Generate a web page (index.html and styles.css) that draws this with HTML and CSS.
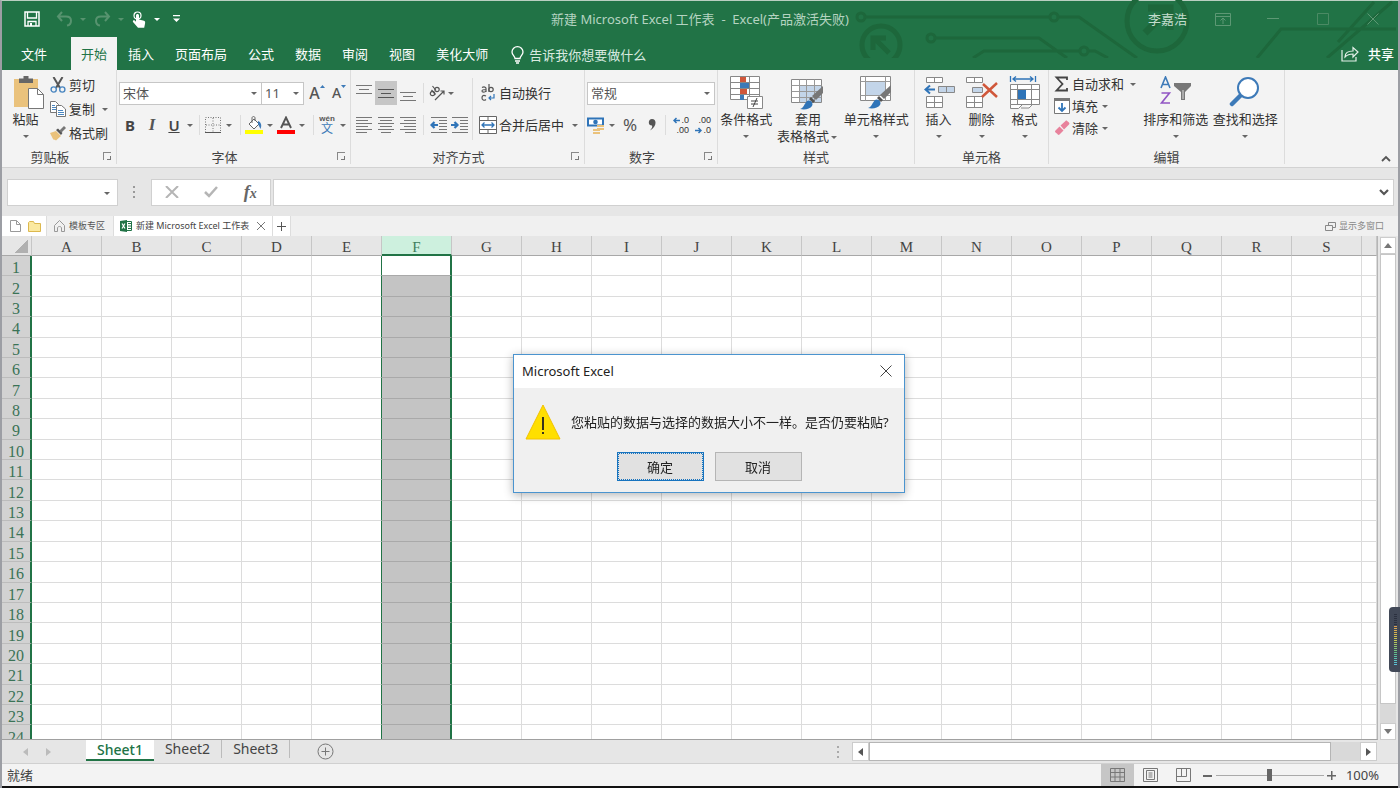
FILE: index.html
```html
<!DOCTYPE html>
<html lang="zh-CN">
<head>
<meta charset="utf-8">
<title>新建 Microsoft Excel 工作表 - Excel</title>
<link rel="stylesheet" href="styles.css">
</head>
<body>
<div class="app">
  <header class="head">
    <svg class="circuit" width="580" height="58" viewBox="820 0 580 58" fill="none" stroke="#1d673b" stroke-width="3">
      <circle cx="861" cy="17" r="4"/><path d="M865 17H1050M1058 17H1079L1137 58"/><circle cx="1054" cy="17" r="4"/>
      <circle cx="881" cy="45" r="19" stroke-width="5"/><path d="M889 53L876 40M873 50V38H886" stroke-width="5"/>
      <circle cx="931" cy="38" r="4"/><path d="M935 38H1039L1067 58M973 58L984 51H1080M1089 51H1095L1108 58"/><circle cx="1084" cy="51" r="4"/>
      <circle cx="1157" cy="21" r="30" stroke-width="5"/><path d="M1145 33L1166 12M1148 8H1170V30" stroke-width="7"/>
      <path d="M1257 58L1281 29H1396M1327 58L1392 2M1338 42L1374 2"/>
    </svg>
    <div class="titlebar">
      <div class="quick">
        <button class="q q-save" aria-label="保存"><svg width="16" height="16" viewBox="0 0 16 16"><path d="M1 1h14v14H1z" fill="none" stroke="#fff" stroke-width="1.5"/><path d="M3.5 1v6h9V1M4 15v-4.500h8V15" fill="none" stroke="#fff" stroke-width="1.300"/><path d="M6 12h2v3H6z" fill="#fff"/></svg></button>
        <button class="q" aria-label="撤消"><svg width="17" height="16" viewBox="0 0 17 16" fill="none" stroke="#57936f" stroke-width="2"><path d="M6 1L2 5.500l4 4.500M2 5.500h8c7 0 6 8 1 9"/></svg></button><i class="car dim"></i>
        <button class="q" aria-label="恢复"><svg width="17" height="16" viewBox="0 0 17 16" fill="none" stroke="#57936f" stroke-width="2"><path d="M11 1l4 4.500-4 4.500M15 5.500H7c-7 0-6 8-1 9"/></svg></button><i class="car dim"></i>
        <button class="q q-touch" aria-label="触摸模式"><svg width="14" height="17" viewBox="0 0 14 17"><circle cx="5.500" cy="4.500" r="3.500" fill="none" stroke="#fff" stroke-width="1.200"/><path d="M4 4.500c0-2 3-2 3 0V8.500l5 1.200c1.300.4 1.300 1.500 1 3l-.8 4H6L1 11c-.6-1.600 1-2.200 2-1.200l1 1z" fill="#fff"/></svg></button><i class="car light"></i>
        <button class="q" aria-label="自定义快速访问工具栏"><svg width="7" height="8" viewBox="0 0 7 8" fill="#fff"><path d="M0 0h7v1.300H0zM0 3.500h7L3.500 7z"/></svg></button>
      </div>
      <h1 class="doc-title">新建 Microsoft Excel 工作表&nbsp; -&nbsp; Excel(产品激活失败)</h1>
      <div class="win">
        <span class="user">李嘉浩</span>
        <button aria-label="功能区显示选项"><svg width="16" height="13" viewBox="0 0 16 13" fill="none" stroke="#5d9874"><path d="M.5.500h15v12H.5zM.5 3.500h15M8 11V5M5.500 7.500L8 5l2.500 2.500"/></svg></button>
        <button aria-label="最小化"><svg width="12" height="13" viewBox="0 0 12 13" stroke="#5d9874"><path d="M0 5.500h12"/></svg></button>
        <button aria-label="最大化"><svg width="12" height="13" viewBox="0 0 12 13" fill="none" stroke="#4b8a64"><path d="M.5.500h11v11H.5z"/></svg></button>
        <button aria-label="关闭"><svg width="12" height="13" viewBox="0 0 12 13" stroke="#5d9874"><path d="M.5.500l11 11M11.500.500l-11 11"/></svg></button>
      </div>
    </div>
    <nav class="tabs">
      <button class="tab file">文件</button><button class="tab on">开始</button><button class="tab">插入</button><button class="tab">页面布局</button><button class="tab">公式</button><button class="tab">数据</button><button class="tab">审阅</button><button class="tab">视图</button><button class="tab">美化大师</button>
      <button class="tell"><svg width="13" height="18" viewBox="0 0 13 18" fill="none" stroke="#fff" stroke-width="1.300"><path d="M4 12.500C4 10 1 9 1 6a5.500 5.300 0 0 1 11 0c0 3-3 4-3 6.500zM4 15h5M5 17h3"/></svg>告诉我你想要做什么</button>
      <button class="share"><svg width="18" height="16" viewBox="0 0 18 16" fill="none" stroke="#e4f1e9" stroke-width="1.200"><path d="M1 4v11h14v-4M4 11c0-4 3-6 8-6V1.500L17 6l-5 5V8c-4 0-6 1-8 3z"/></svg>共享</button>
    </nav>
  </header>

  <section class="ribbon">
    <div class="group g-clip">
      <div class="body">
        <button class="big paste"><svg width="32" height="34" viewBox="0 0 32 34"><path d="M1 3h24v28H1z" fill="#eac27c"/><path d="M6 2.500h4.500V0h5v2.500H20V7H6z" fill="#666"/><path d="M15.500 12.500h9l6 6v14h-15z" fill="#fff" stroke="#777"/><path d="M24.500 12.500v6h6" fill="none" stroke="#777"/></svg><span>粘贴</span><i class="car"></i></button>
        <div class="list l24">
          <button><svg width="16" height="16" viewBox="0 0 16 16" fill="none"><path d="M3.500 0l6.500 11M12.500 0L6 11" stroke="#555" stroke-width="2"/><circle cx="3.700" cy="12.500" r="2.600" stroke="#4a86c0" stroke-width="1.400"/><circle cx="12.300" cy="12.500" r="2.600" stroke="#4a86c0" stroke-width="1.400"/></svg>剪切</button>
          <button><svg width="16" height="16" viewBox="0 0 16 16" fill="#fff" stroke="#777"><path d="M.5.500h5l3 3v8h-8z"/><path d="M2 4.500h3M2 6.500h4M2 8.500h4" stroke="#4a86c0"/><path d="M6.500 4.500h5l4 3.500v7.500h-9z"/><path d="M8 9.500h5M8 11.500h6M8 13.500h6" stroke="#4a86c0"/></svg>复制<i class="car"></i></button>
          <button><svg width="16" height="16" viewBox="0 0 16 16"><path d="M0 8l6-2 5 5-5 4.500c-1-1-2 0-3-1.500z" fill="#eac27c"/><path d="M6 5l2-1.500L12.500 8 11 10z" fill="#555"/><path d="M9.500 5.500L14 1l2 2-4.500 4.500z" fill="#777"/></svg>格式刷</button>
        </div>
      </div>
      <footer><span>剪贴板</span><i class="launch"></i></footer>
    </div>

    <div class="group g-font">
      <div class="body rows">
        <div class="row r1">
          <span class="sel s-font"><select aria-label="字体"><option>宋体</option></select></span><span class="sel s-size"><select aria-label="字号"><option>11</option></select></span>
          <button class="t22 grow" aria-label="增大字号">A<svg width="5" height="3"><path d="M0 3L2.500 0 5 3z" fill="#3d7ab8"/></svg></button>
          <button class="t22 shrink" aria-label="减小字号">A<svg width="5" height="3"><path d="M0 0h5L2.500 3z" fill="#3d7ab8"/></svg></button>
        </div>
        <div class="row r2">
          <button class="t22 b">B</button><button class="t22 i">I</button><button class="t22 u">U</button><i class="car c10"></i><i class="sep"></i>
          <button class="t18" aria-label="边框"><svg width="16" height="16" viewBox="0 0 16 16" fill="none" stroke="#777"><path d="M.5 15.500V.5h15v15M8 1v14M1 8h14" stroke-dasharray="1 1.500"/><path d="M0 15.500h16" stroke="#555"/></svg></button><i class="car c14"></i><i class="sep"></i>
          <button class="t18" aria-label="填充颜色"><svg width="18" height="18" viewBox="0 0 18 18"><path d="M0 14h18v4H0z" fill="#ff0"/><path d="M4 8l5-5 5 5-5 5z" fill="#fff" stroke="#666"/><path d="M7 7V2c0-2 3-2 3 0v3" fill="none" stroke="#666"/><path d="M13 5c3 1 4 4 2.500 8L13 8z" fill="#3d7ab8"/></svg></button><i class="car c14"></i>
          <button class="t18" aria-label="字体颜色"><svg width="18" height="18" viewBox="0 0 18 18"><path d="M0 14h18v4H0z" fill="#f00"/><path d="M4 12L9 1.500 14 12M6 8.500h6" fill="none" stroke="#555" stroke-width="1.900"/></svg></button><i class="car c14"></i><i class="sep"></i>
          <button class="t18 py"><small>wén</small><span>文</span></button><i class="car c14"></i>
        </div>
      </div>
      <footer><span>字体</span><i class="launch"></i></footer>
    </div>

    <div class="group g-align">
      <div class="body cols">
        <div class="rows a-left">
          <div class="row r1">
            <button class="t22" aria-label="顶端对齐"><svg width="16" height="16" viewBox="0 0 16 16" stroke="#777"><path d="M0 .5h16M3 4.500h10M0 8.500h16"/></svg></button>
            <button class="t22 pressed" aria-label="垂直居中"><svg width="16" height="16" viewBox="0 0 16 16" stroke="#555"><path d="M0 4.500h16M3 8.500h10M0 12.500h16"/></svg></button>
            <button class="t22" aria-label="底端对齐"><svg width="16" height="16" viewBox="0 0 16 16" stroke="#777"><path d="M0 7.500h16M3 11.500h10M0 15.500h16"/></svg></button><i class="sep"></i>
            <button class="t18" aria-label="方向"><svg width="16" height="16" viewBox="0 0 16 16" fill="none" stroke="#555" stroke-width="1.200"><circle cx="3.500" cy="8.500" r="2.200"/><path d="M2.500 5l4 4.500"/><circle cx="8" cy="4.500" r="2.200"/><path d="M3.500 1l3.500 4.500M6 15l9-9M11.500 6H15v3.500"/></svg></button><i class="car c10"></i>
          </div>
          <div class="row r2">
            <button class="t22" aria-label="左对齐"><svg width="16" height="16" viewBox="0 0 16 16" stroke="#777"><path d="M0 .5h16M0 3.500h12M0 6.500h16M0 9.500h12M0 12.500h16M0 15.500h11"/></svg></button>
            <button class="t22" aria-label="居中"><svg width="16" height="16" viewBox="0 0 16 16" stroke="#777"><path d="M0 .5h16M2 3.500h12M0 6.500h16M2 9.500h12M0 12.500h16M3 15.500h10"/></svg></button>
            <button class="t22" aria-label="右对齐"><svg width="16" height="16" viewBox="0 0 16 16" stroke="#777"><path d="M0 .5h16M4 3.500h12M0 6.500h16M4 9.500h12M0 12.500h16M5 15.500h11"/></svg></button><i class="sep"></i>
            <button class="t22 ind" aria-label="减少缩进"><svg width="18" height="16" viewBox="0 0 18 16" stroke="#777"><path d="M1 .5h16M9 3.500h8M9 6.500h8M9 9.500h8M9 12.500h8M1 15.500h16"/><path d="M8 8H2M4.500 5L1.500 8l3 3" fill="none" stroke="#2f74b8" stroke-width="2.200"/></svg></button>
            <button class="t22 ind" aria-label="增加缩进"><svg width="18" height="16" viewBox="0 0 18 16" stroke="#777"><path d="M1 .5h16M9 3.500h8M9 6.500h8M9 9.500h8M9 12.500h8M1 15.500h16"/><path d="M0 8h6M3.500 5l3 3-3 3" fill="none" stroke="#2f74b8" stroke-width="2.200"/></svg></button>
          </div>
        </div>
        <div class="rows a-right">
          <div class="row r1"><button class="wide"><svg width="18" height="18" viewBox="0 0 18 18" fill="none" stroke="#555" stroke-width="1.200"><path d="M3 3.500c2-1 4-.5 4 1V8M7 5.500C5 5.500 3 5.500 3 7s3 1.500 4 0M10 0v8M7 12c-3-1.500-4 0-4 2s2 3 4 1.500"/><circle cx="12" cy="5.500" r="2.200"/><path d="M15 10v4h-5M12 12l-2 2 2 2" stroke="#2f74b8"/></svg>自动换行</button></div>
          <div class="row r2"><button class="wide"><svg width="18" height="18" viewBox="0 0 18 18" fill="#fff" stroke="#666"><path d="M.5.500h17v17H.5zM9 .5v4M9 13v4.500M.5 4.500h17M.5 13.500h17"/><path d="M3 9h12M5.500 6.500L3 9l2.500 2.500M12.500 6.500L15 9l-2.500 2.500" fill="none" stroke="#2f74b8" stroke-width="1.300"/></svg>合并后居中<i class="car c14"></i></button></div>
        </div>
      </div>
      <footer><span>对齐方式</span><i class="launch"></i></footer>
    </div>

    <div class="group g-num">
      <div class="body rows">
        <div class="row r1"><span class="sel s-num"><select aria-label="数字格式"><option>常规</option></select></span></div>
        <div class="row r2 numrow">
          <button class="t18" aria-label="会计数字格式"><svg width="18" height="17" viewBox="0 0 18 17"><path d="M1 1.500h15v7H1z" fill="#fff" stroke="#2f74b8" stroke-width="2"/><circle cx="8.500" cy="5" r="2.300" fill="#2f74b8"/><path d="M10 8h7v2h-7zM10 11h7v2h-7zM6 12h7v2H6zM6 15h7v2H6z" fill="#eac27c"/></svg></button><i class="car c14"></i>
          <button class="t22 pct">%</button><button class="t22" aria-label="千位分隔样式"><svg width="9" height="12" viewBox="0 0 9 12"><path d="M4 0c5 0 5 8-2 11.500 2-2 2.500-3.500 2-5C-.5 6.500 0 0 4 0z" fill="#555"/></svg></button><i class="sep"></i>
          <button class="dec"><span><svg width="7" height="7" viewBox="0 0 7 7" fill="none" stroke="#2f74b8" stroke-width="1.500"><path d="M7 3.500H1M3.500 1L1 3.500 3.500 6"/></svg>.0</span><span>.00</span></button><button class="dec"><span>.00</span><span><svg width="7" height="7" viewBox="0 0 7 7" fill="none" stroke="#2f74b8" stroke-width="1.500"><path d="M0 3.500h6M3.500 1L6 3.500 3.500 6"/></svg>.0</span></button>
        </div>
      </div>
      <footer><span>数字</span><i class="launch"></i></footer>
    </div>

    <div class="group g-style">
      <div class="body">
        <button class="big"><svg width="34" height="34" viewBox="1 0 34 34"><path d="M2.500.500h29v23h-29zM12.500.5v23M21.500.5v23M2.500 6.500h29M2.500 12.500h29M2.500 18.500h29" fill="#fff" stroke="#888"/><path d="M12 1h6v5h-6zM12 13h7v5h-7z" fill="#d0573a"/><path d="M12 7h9v5h-9zM12 19h4v5h-4z" fill="#3d7ab8"/><path d="M19.500 20.500h15v12h-15z" fill="#fff" stroke="#888"/><path d="M23 25h7M23 28h7M29 22l-4 9" stroke="#444" fill="none"/></svg><span>条件格式</span><i class="car"></i></button>
        <button class="big"><svg width="34" height="34" viewBox="0 0 34 34"><path d="M.5 3.500h30v23H.5z" fill="#fff" stroke="#888"/><path d="M8 9h22v17H8z" fill="#c3d5e9"/><path d="M.5 9.500h30M.5 15.500h30M.5 21.500h30M8.500 3.500v23M15.500 3.500v23M23.500 3.500v23" stroke="#999"/><path d="M32 10v7l-7 7-4-4z" fill="#777"/><path d="M20 21l4 4-2 2-4-4z" fill="#555"/><path d="M9 33c4-1 4-5 7-8 3-2 7 2 5 5s-7 4-12 3z" fill="#2f74b8"/></svg><span>套用<br>表格格式<i class="car c10"></i></span></button>
        <button class="big"><svg width="34" height="34" viewBox="0 0 34 34"><path d="M1.500.500h30v24h-30z" fill="#fff" stroke="#888"/><path d="M6.500.5v24M26.500.5v24M1.500 5.500h30M1.500 19.500h30" stroke="#999"/><path d="M7 6h19v13H7z" fill="#c3d5e9"/><path d="M32 9v7l-7 7-4-4z" fill="#777"/><path d="M20 20l4 4-2 2-4-4z" fill="#555"/><path d="M9 32c4-1 4-5 7-8 3-2 7 2 5 5s-7 4-12 3z" fill="#2f74b8"/></svg><span>单元格样式</span><i class="car"></i></button>
      </div>
      <footer><span>样式</span></footer>
    </div>

    <div class="group g-cell">
      <div class="body">
        <button class="big"><svg width="32" height="34" viewBox="0 0 32 34" fill="#fff" stroke="#888"><path d="M3.500 1.500h16v5h-16zM11.500 1.500v5M3.500 20.500h16v11h-16zM11.500 20.500v11M3.500 26.500h16"/><path d="M15.500 10.500h16v6h-16zM23.500 10.500v6" fill="#c3d5e9"/><path d="M12 13.500H3M7 9.500l-4.500 4 4.500 4" fill="none" stroke="#2f74b8" stroke-width="2"/></svg><span>插入</span><i class="car"></i></button>
        <button class="big"><svg width="32" height="34" viewBox="0 0 32 34" fill="#fff" stroke="#888"><path d="M.5 1.500h16v5H.5zM8.500 1.500v5M.5 20.500h16v11H.5zM8.500 20.500v11M.5 26.500h16"/><path d="M6.500 11.500h10v5h-10z" fill="#c3d5e9"/><path d="M17 8l14 13M31 7L16 21" fill="none" stroke="#d0573a" stroke-width="2.500"/></svg><span>删除</span><i class="car"></i></button>
        <button class="big"><svg width="32" height="34" viewBox="0 0 32 34" fill="#fff" stroke="#888"><path d="M1.500 8.500h29v20h-29zM8.500 8.500v20M22.500 8.500v20M1.500 13.500h29M1.500 23.500h29M1.500 28.500v4h8l4-4M12 32h8l3-3"/><path d="M9 14h8v9H9z" fill="#2f74b8" stroke="none"/><path d="M1.500 0v6M26.500 0v6M4 3h20M7 .5L4 3l3 2.500M21 .5L24 3l-3 2.500" fill="none" stroke="#2f74b8" stroke-width="1.300"/></svg><span>格式</span><i class="car"></i></button>
      </div>
      <footer><span>单元格</span></footer>
    </div>

    <div class="group g-edit">
      <div class="body">
        <div class="list l23">
          <button><svg width="16" height="16" viewBox="0 0 16 16" fill="none" stroke="#444" stroke-width="1.800"><path d="M13 4V1.500H2.500L8.500 8l-6 6.500H13V12"/></svg>自动求和<i class="car"></i></button>
          <button><svg width="16" height="16" viewBox="0 0 16 16"><path d="M.5.500h15v15H.5z" fill="#fff" stroke="#777"/><path d="M0 0h16v3H0z" fill="#777"/><path d="M8 5v8M4.500 9.500L8 13l3.500-3.500" fill="none" stroke="#2f74b8" stroke-width="1.800"/></svg>填充<i class="car c12"></i></button>
          <button><svg width="16" height="16" viewBox="0 0 16 16"><path d="M6.500 5.500l5-4.500c1-1 1.500 0 2.500.800s2 1.700 1 2.700l-5 5z" fill="#e8829c"/><path d="M5.500 6.500l4 4-4 4c-1 1-1.500 0-3-1.200S.500 11.500 1.500 10.500z" fill="#e8829c"/></svg>清除<i class="car c12"></i></button>
        </div>
        <button class="big"><svg width="32" height="34" viewBox="0 0 32 34" fill="none"><path d="M1 12L5.500 1 10 12M2.500 8.500h6" stroke="#3d7ab8" stroke-width="1.600"/><path d="M1.500 17h8l-8 10h8.500" stroke="#9155c4" stroke-width="1.600"/><path d="M14 7h17v3l-6 6v8h-4v-8l-7-6z" fill="#777"/><path d="M23 14v9" stroke="#ddd"/></svg><span>排序和筛选</span><i class="car"></i></button>
        <button class="big"><svg width="32" height="34" viewBox="0 0 32 34"><path d="M11 20l-8 8" stroke="#3d7ab8" stroke-width="4.500" stroke-linecap="round"/><circle cx="19" cy="12" r="10" fill="#fff" stroke="#3d7ab8" stroke-width="2"/></svg><span>查找和选择</span><i class="car"></i></button>
      </div>
      <footer><span>编辑</span></footer>
    </div>
    <button class="collapse" aria-label="折叠功能区"><svg width="10" height="7" viewBox="0 0 10 7" fill="none" stroke="#555" stroke-width="1.800"><path d="M1 6l4-4 4 4"/></svg></button>
  </section>

  <section class="formula">
    <span class="sel namebox"><input aria-label="名称框"></span>
    <svg class="dots" width="2" height="14" viewBox="0 0 2 14" fill="#999"><path d="M0 1h2v2H0zM0 6h2v2H0zM0 11h2v2H0z"/></svg>
    <div class="fx">
      <button aria-label="取消输入"><svg width="14" height="12" viewBox="0 0 14 12" stroke="#b5b5b5" stroke-width="2"><path d="M1 0l12 12M13 0L1 12"/></svg></button>
      <button aria-label="输入"><svg width="14" height="12" viewBox="0 0 14 12" fill="none" stroke="#b5b5b5" stroke-width="2.500"><path d="M1 6l4 4 8-9"/></svg></button>
      <button class="fxb">f<sub>x</sub></button>
    </div>
    <div class="fin"><input aria-label="编辑栏"><button aria-label="展开编辑栏"><svg width="10" height="7" viewBox="0 0 10 7" fill="none" stroke="#555" stroke-width="2.200"><path d="M1 1l4 4 4-4"/></svg></button></div>
  </section>

  <section class="docs">
    <div class="d-new"><button aria-label="新建"><svg width="11" height="12" viewBox="0 0 11 12" fill="#fff" stroke="#999"><path d="M.5.500h6l4 4v7H.5zM6.500.500v4h4"/></svg></button><button aria-label="打开"><svg width="13" height="11" viewBox="0 0 13 11" fill="#fbe9a0" stroke="#dcb84e"><path d="M.5 1.500L1.500.500h4l1 2h6v8H.5z"/></svg></button></div>
    <button class="d-tab"><svg width="11" height="12" viewBox="0 0 11 12" fill="none" stroke="#999"><path d="M.5 5.500l5-5 5 5v6H7.500V8c0-2-4-2-4 0v3.500H.5z"/></svg>模板专区</button>
    <div class="d-tab on"><svg width="12" height="12" viewBox="0 0 12 12"><path d="M6 1.500h5.500v9H6z" fill="#fff" stroke="#217346"/><path d="M8 3.500h3M8 6h3M8 8.500h3" stroke="#217346"/><path d="M0 1l7-1v12l-7-1z" fill="#217346"/><path d="M2 3.500l3 5M5 3.500l-3 5" stroke="#fff" stroke-width="1.200"/></svg><span>新建 Microsoft Excel 工作表</span><button aria-label="关闭标签"><svg width="8" height="8" viewBox="0 0 8 8" stroke="#777"><path d="M0 0l8 8M8 0L0 8"/></svg></button></div>
    <button class="d-plus" aria-label="新建标签"><svg width="9" height="9" viewBox="0 0 9 9" stroke="#555"><path d="M4.500 0v9M0 4.500h9"/></svg></button>
    <button class="d-multi"><svg width="11" height="9" viewBox="0 0 11 9" fill="#f0f0f0" stroke="#888"><path d="M3.500.500h7v5h-7z"/><path d="M.5 3.500h7v5h-7z"/></svg>显示多窗口</button>
  </section>

  <main class="sheet">
    <div class="gridwrap"><table class="grid"><colgroup id="cols"></colgroup><thead><tr id="head"></tr></thead><tbody id="rows"></tbody></table></div>
    <div class="vscroll"><button aria-label="向上滚动"><svg width="8" height="5"><path d="M0 5L4 0l4 5z" fill="#777"/></svg></button><div class="vtrack"><div class="vthumb"></div></div><button aria-label="向下滚动"><svg width="8" height="5"><path d="M0 0h8L4 5z" fill="#777"/></svg></button></div>
  </main>

  <section class="sheetbar">
    <div class="snav"><button aria-label="上一个工作表"><svg width="5" height="8"><path d="M5 0v8L0 4z" fill="#bbb"/></svg></button><button aria-label="下一个工作表"><svg width="5" height="8"><path d="M0 0v8l5-4z" fill="#bbb"/></svg></button></div>
    <button class="st on">Sheet1</button><button class="st">Sheet2</button><button class="st">Sheet3</button>
    <button class="sadd" aria-label="新工作表"><svg width="17" height="17" viewBox="0 0 17 17" fill="none" stroke="#777"><circle cx="8.500" cy="8.500" r="7.500"/><path d="M8.500 4.500v8M4.500 8.500h8"/></svg></button>
    <svg class="dots sdots" width="2" height="14" viewBox="0 0 2 14" fill="#aaa"><path d="M0 1h2v2H0zM0 6h2v2H0zM0 11h2v2H0z"/></svg>
    <div class="hscroll"><button aria-label="向左滚动"><svg width="5" height="8"><path d="M5 0v8L0 4z" fill="#555"/></svg></button><div class="htrack"><div class="hthumb"></div></div><button aria-label="向右滚动"><svg width="5" height="8"><path d="M0 0v8l5-4z" fill="#555"/></svg></button></div>
  </section>

  <footer class="status">
    <span class="ready">就绪</span>
    <button class="view on" aria-label="普通"><svg width="15" height="14" viewBox="0 0 15 14" fill="none" stroke="#777"><path d="M.5.500h14v13H.5zM5 .5v13M10 .5v13M.5 4.500h14M.5 9h14"/></svg></button>
    <button class="view" aria-label="页面布局"><svg width="15" height="14" viewBox="0 0 15 14" fill="none" stroke="#777"><path d="M.5.500h14v13H.5zM3.500 2.500h8v9h-8zM5.500 5h4M5.500 7h4M5.500 9h4"/></svg></button>
    <button class="view" aria-label="分页预览"><svg width="15" height="14" viewBox="0 0 15 14" fill="none" stroke="#777"><path d="M.5.500h14v13H.5zM5.500.500v8M10.500.500v8M.5 8.500h10"/></svg></button>
    <button class="zb" aria-label="缩小"><svg width="9" height="9"><path d="M0 4h9v2H0z" fill="#666"/></svg></button>
    <input class="zoom" type="range" min="0" max="100" value="50" aria-label="缩放">
    <button class="zb" aria-label="放大"><svg width="9" height="9"><path d="M0 4h9v1.500H0zM4 0h1.500v9H4z" fill="#666"/></svg></button>
    <span class="pct100">100%</span>
  </footer>
</div>

<section class="dialog" role="dialog" aria-labelledby="dt">
  <header><h2 id="dt">Microsoft Excel</h2><button aria-label="关闭"><svg width="12" height="12" viewBox="0 0 12 12" stroke="#444"><path d="M.5.500l11 11M11.500.500l-11 11"/></svg></button></header>
  <div class="msg"><svg width="36" height="36" viewBox="0 0 36 36"><path d="M18 1l17 34H1z" fill="#ffdf00" stroke="#f2c200"/><path d="M18 13v13M18 28v2" stroke="#222" stroke-width="1.800"/></svg><p>您粘贴的数据与选择的数据大小不一样。是否仍要粘贴?</p></div>
  <div class="acts"><button class="ok">确定</button><button>取消</button></div>
</section>
<div class="meter"><i></i><b></b></div>
<script src="script.js"></script>
</body>
</html>
```
FILE: styles.css
```css
* { box-sizing: border-box; }
body { margin: 0; font: 13px/18px "Noto Sans", "Noto Sans CJK SC", sans-serif; color: #333; overflow: hidden; }
button { font: inherit; color: inherit; background: none; border: 0; padding: 0; display: flex; align-items: center; justify-content: center; white-space: nowrap; }
h1, h2, p { margin: 0; font-size: 13px; font-weight: 400; }
svg { display: block; flex: none; }
input, select { font: inherit; color: inherit; border: 0; outline: 0; background: none; padding: 0; margin: 0; appearance: none; }

.app { height: 100vh; display: flex; flex-direction: column; border: solid #9c9ea4; border-width: 1px 2px 0; border-top-color: #b9cfc1; background: #e6e6e6; }

/* title bar and ribbon tabs */
.head { position: relative; background: #217346; color: #fff; height: 69px; flex: none; display: flex; flex-direction: column; }
.circuit { position: absolute; right: -2px; top: -1px; }
.titlebar { position: relative; height: 36px; display: flex; align-items: center; justify-content: space-between; }
.quick { display: flex; align-items: center; padding-left: 19px; }
.q { width: 22px; height: 24px; }
.q-save { margin-right: 10px; }
.q-touch { width: 20px; }
.car { flex: none; display: inline-flex; align-items: center; justify-content: center; width: 16px; height: 8px; }
.car::before { content: ""; border: solid transparent; border-width: 3px 3px 0; border-top-color: #666; }
.car.dim::before { border-top-color: #57936f; }
.car.light::before { border-top-color: #fff; }
.car.c10 { width: 10px; }
.car.c12 { width: 12px; }
.car.c14 { width: 14px; }
.doc-title { position: absolute; left: 0; right: 0; text-align: center; color: #b5d3c1; pointer-events: none; }
.win { display: flex; align-items: center; }
.win button { width: 50px; height: 24px; }
.user { color: #c3dccd; margin-right: 11px; }
.tabs { position: relative; display: flex; gap: 1px; height: 33px; }
.tab { padding: 0 10px; }
.tab.file { padding: 0 23px 0 19px; }
.tab.on { background: #f3f3f3; color: #217346; }
.tell { gap: 5px; margin-left: 12px; padding-top: 2px; color: #d9eae0; }
.share { gap: 9px; margin-left: auto; padding-right: 4px; font-weight: 500; }

/* ribbon */
.ribbon { height: 98px; flex: none; display: flex; background: #f3f3f3; border-bottom: 1px solid #d2d2d2; }
.group { flex: none; display: flex; flex-direction: column; border-right: 1px solid #dcdcdc; margin-bottom: 3px; }
.g-clip { width: 115px; }
.g-font, .g-align { width: 234px; }
.g-num { width: 133px; }
.g-style { width: 197px; }
.g-cell { width: 134px; }
.g-edit { width: 236px; }
.body { flex: 1; display: flex; }
.group footer { height: 16px; display: flex; align-items: center; text-align: center; color: #444; }
.group footer span { flex: 1; padding-top: 1px; }
.launch { width: 18px; height: 8px; display: flex; }
.launch::before { content: ""; width: 7px; height: 7px; margin-left: 5px; border: solid #888; border-width: 1px 0 0 1px; background: linear-gradient(#777, #777) right bottom / 4px 1px no-repeat, linear-gradient(#777, #777) right bottom / 1px 4px no-repeat, linear-gradient(45deg, transparent 42%, #999 42% 58%, transparent 58%) right bottom / 4px 4px no-repeat; }
.launch::before { background: linear-gradient(#777, #777) right bottom / 4px 1px no-repeat, linear-gradient(#777, #777) right bottom / 1px 4px no-repeat; }
.big { flex: 1 1 auto; flex-direction: column; justify-content: flex-start; padding-top: 6px; line-height: 17px; color: #333; }
.big > span { display: block; margin-top: 1px; }
.big > .car { margin-top: 4px; }
.big span .car { vertical-align: middle; }
.g-cell .body { padding-left: 2px; }
.g-cell .big { flex: none; width: 43px; }
.g-style .body { padding-right: 3px; }
.g-edit .body { padding-right: 4px; }
.paste { flex: none; width: 46px; padding-left: 7px; }
.paste > span, .paste > .car { margin-right: 6px; }
.list { display: flex; flex-direction: column; }
.list button { gap: 4px; justify-content: flex-start; }
.list .car { margin-left: -1px; }
.l24 { padding: 3px 0 0 2px; }
.l24 button { height: 24px; gap: 3px; }
.l23 { padding: 3px 0 0 5px; width: 92px; }
.l23 button { height: 22px; gap: 2px; }
.rows { display: flex; flex-direction: column; gap: 8px; padding-top: 11px; }
.row { display: flex; height: 24px; align-items: center; }
.g-font .rows, .g-num .rows { padding-left: 2px; }
.t22 { width: 22px; height: 24px; }
.t18 { width: 18px; height: 24px; }
.ind { width: 21px; }
.sep { width: 1px; height: 20px; background: #dcdcdc; margin: 0 4px; }
.sel { position: relative; display: block; background: #fff; border: 1px solid #c6c6c6; height: 23px; }
.sel select, .sel input { width: 100%; height: 21px; padding-left: 3px; color: #555; display: block; }
.sel::after { content: ""; position: absolute; right: 4px; top: 9px; border: solid transparent; border-width: 3px 3px 0; border-top-color: #666; pointer-events: none; }
.s-font { width: 143px; }
.s-size { width: 42px; border-left: 0; margin-right: 2px; }
.s-num { width: 128px; }
.grow, .shrink { font-size: 16px; color: #555; font-weight: 500; }
.shrink { font-size: 14px; }
.grow svg, .shrink svg { align-self: flex-start; margin-top: 4px; }
.b { font-weight: 700; font-size: 15px; color: #444; }
.i { font: italic 700 17px "Liberation Serif", serif; color: #555; }
.u { font-size: 15px; font-weight: 600; text-decoration: underline; color: #444; }
.py { flex-direction: column; color: #3d7ab8; font-size: 12px; line-height: 12px; }
.py small { font: 700 8px/8px "Liberation Sans", sans-serif; color: #555; }
.g-font .body { padding-left: 2px; }
.a-left { width: 121px; padding-left: 2px; }
.a-left, .a-right { flex: none; }
.a-right { padding-left: 6px; border-left: 1px solid #dcdcdc; margin: 8px 0; padding-top: 3px; }
.pressed { background: #c6c6c6; }
.wide { gap: 2px; }
.wide .car { margin-left: 2px; }
.g-num .body { padding-left: 2px; }
.pct { font-size: 17px; color: #555; }
.numrow .sep { margin: 0 5px 0 2px; }
.dec { width: 22px; flex-direction: column; align-items: flex-end; padding-right: 4px; font: 9px/10px "Liberation Sans", sans-serif; color: #333; }
.dec span { display: flex; align-items: center; gap: 1px; }
.collapse { margin: auto 5px 2px auto; width: 14px; height: 14px; }

/* formula bar */
.formula { flex: none; display: flex; align-items: center; height: 48px; padding: 0 4px 0 5px; }
.namebox { width: 111px; height: 27px; border-color: #d0d0d0; }
.namebox::after { top: 12px; right: 7px; }
.dots { margin: 0 16px 0 15px; }
.fx { display: flex; width: 120px; height: 27px; background: #fff; border: 1px solid #d0d0d0; }
.fx button { flex: 1; }
.fxb { font: italic 700 18px/20px "Liberation Serif", serif; color: #666; }
.fxb sub { font-size: 14px; line-height: 10px; align-self: flex-end; margin-bottom: 6px; }
.fin { flex: 1; display: flex; margin-left: 2px; height: 27px; background: #fff; border: 1px solid #d0d0d0; }
.fin input { flex: 1; }
.fin button { width: 18px; }

/* document tabs */
.docs { flex: none; display: flex; height: 20px; background: #f0f0f0; font-size: 9px; line-height: 14px; color: #555; }
.d-new { display: flex; gap: 7px; width: 44px; padding-left: 8px; background: #fff; }
.d-tab { display: flex; align-items: center; gap: 4px; padding: 0 8px 0 7px; border-left: 1px solid #ddd; }
.d-tab.on { background: #fff; color: #444; padding: 0 3px 0 6px; }
.d-tab.on button { width: 16px; }
.d-plus { width: 19px; background: #fff; border: solid #ddd; border-width: 0 1px; }
.d-multi { margin-left: auto; gap: 3px; padding-right: 14px; color: #888; }

/* worksheet */
.sheet { flex: 1; min-height: 0; display: flex; }
.gridwrap { flex: 1; min-width: 0; overflow: hidden; background: #fff; border-right: 1px solid #b5b5b5; border-bottom: 1px solid #a0a0a0; }
.grid { table-layout: fixed; width: 100%; height: calc(100% + 7px); border-collapse: separate; border-spacing: 0; }
.grid th, .grid td { padding: 0; font: 16px/16px "Liberation Serif", serif; text-align: center; }
.grid thead th { height: 20px; background: #e6e6e6; border: solid #a8a8a8; border-width: 0 0 1px; border-right: 1px solid #c6c6c6; color: #444; padding-top: 4px; line-height: 15px; font-size: 15px; }
.grid tbody td { border: solid #dcdcdc; border-width: 0 1px 1px 0; }
.grid tbody th { background: #d2d2d2; color: #3a7356; border-right: 2px solid #217346; border-bottom: 1px solid #bcbcbc; padding-top: 4px; line-height: 15px; }
.grid .corner { background: linear-gradient(135deg, transparent 50%, #b0b0b0 50%) 12px 4px / 14px 13px no-repeat #e6e6e6; }
.grid .rh { width: 30px; }
.grid .ch { width: 70px; }
.grid thead .f { background: #cdf0de; color: #3e7d5c; border-bottom: 2px solid #217346; line-height: 14px; }
.grid tbody .f { background: #c4c4c4; border-bottom-color: #a9a9a9; border-right: 2px solid #217346; }
.grid tbody tr:first-child .f { background: #fff; }
.grid tbody .e { border-right-color: #217346; }
.vscroll { width: 20px; padding: 1px 2px 0; display: flex; flex-direction: column; background: #e6e6e6; }
.vscroll button { height: 17px; background: #fff; border: 1px solid #ccc; }
.vtrack { flex: 1; background: #d9d9d9; }
.vthumb { height: 96%; background: #fff; border: 1px solid #c6c6c6; }

/* sheet tabs */
.sheetbar { flex: none; display: flex; height: 23px; align-items: center; font-size: 14px; color: #444; }
.snav { width: 84px; display: flex; gap: 18px; padding-left: 21px; }
.st { align-self: flex-start; height: 18px; padding: 0 11px; border-right: 1px solid #bbb; }
.st.on { height: 21px; background: #fff; color: #217346; border: 0; border-bottom: 2px solid #217346; font-weight: 500; }
.sadd { margin-left: 27px; }
.sdots { margin: 0 13px 0 auto; }
.hscroll { width: 525px; height: 19px; display: flex; margin-right: 21px; }
.hscroll button { width: 17px; background: #fff; border: 1px solid #ccc; }
.htrack { flex: 1; background: #d9d9d9; }
.hthumb { width: 94%; height: 19px; background: #fff; border: 1px solid #b5b5b5; }

/* status bar */
.status { flex: none; height: 25px; display: flex; align-items: stretch; background: #f3f3f3; border-top: 1px solid #d0d0d0; border-bottom: 2px solid #111; padding: 0 19px 0 5px; color: #444; }
.ready { flex: 1; align-self: center; }
.view { width: 33px; }
.view.on { background: #c6c6c6; }
.zb { width: 16px; }
.zoom { width: 108px; align-self: center; height: 12px; background: linear-gradient(#aaa, #aaa) center / 100% 1px no-repeat; }
.zoom::-webkit-slider-thumb { appearance: none; width: 5px; height: 12px; background: #666; }
.pct100 { align-self: center; margin-left: 6px; }

/* message box */
.dialog { position: fixed; left: 513px; top: 354px; width: 392px; background: #f0f0f0; border: 1px solid #4b94cf; box-shadow: 0 2px 9px rgba(0, 0, 0, .3); color: #222; }
.dialog header { display: flex; align-items: center; justify-content: space-between; height: 33px; padding: 0 12px 2px 8px; background: #fff; }
.msg { display: flex; align-items: center; gap: 10px; padding: 16px 0 12px 11px; white-space: nowrap; }
.acts { display: flex; justify-content: center; gap: 11px; padding-bottom: 11px; }
.acts button { width: 87px; height: 29px; background: #e1e1e1; border: 1px solid #b5b5b5; }
.acts .ok { border: 2px solid #1874bf; outline: 1px dotted #e1e1e1; outline-offset: -2px; }

/* edge level meter */
.meter { position: fixed; right: 0; top: 607px; width: 11px; height: 65px; padding: 7px 3px 7px 5px; background: #414857; border-radius: 4px 0 0 4px; display: flex; flex-direction: column; }
.meter i { height: 12px; background: repeating-linear-gradient(#2c3140 0 1px, #414857 1px 2px); }
.meter b { flex: 1; background: repeating-linear-gradient(transparent 0 1px, #414857 1px 2px), linear-gradient(#e0a050, #c9c850 35%, #5cc08a 70%, #5ac0dc); }
```
FILE: script.js
```javascript
const letters = "ABCDEFGHIJKLMNOPQRS".split("");
const mark = { E: "e", F: "f" };
const cls = l => mark[l] ? ` class="${mark[l]}"` : "";

document.getElementById("cols").innerHTML =
  '<col class="rh">' + '<col class="ch">'.repeat(letters.length) + "<col>";
document.getElementById("head").innerHTML =
  '<th class="corner"></th>' + letters.map(l => `<th${cls(l)}>${l}</th>`).join("") + "<th></th>";

let rows = "";
for (let n = 1; n <= 24; n++) {
  rows += `<tr><th>${n}</th>` + letters.map(l => `<td${cls(l)}></td>`).join("") + "<td></td></tr>";
}
document.getElementById("rows").innerHTML = rows;
```
